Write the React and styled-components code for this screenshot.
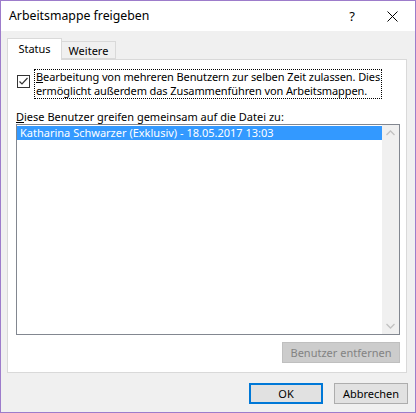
import styled, { createGlobalStyle } from 'styled-components'

const GlobalStyle = createGlobalStyle`
  html, body {
    margin: 0;
    padding: 0;
    background: #ffffff;
  }
  body {
    font-family: "Noto Sans", "Open Sans", sans-serif;
    font-size: 11px;
    color: #000;
  }
  * {
    box-sizing: border-box;
  }
`

const Window = styled.div`
  width: 416px;
  height: 413px;
  border: 1px solid #9d7ccb;
  display: flex;
  flex-direction: column;
  background: #f0f0f0;
`

const TitleBar = styled.div`
  height: 30px;
  background: #ffffff;
  display: flex;
  align-items: center;
  padding-left: 8px;
  flex-shrink: 0;
`

const Title = styled.div`
  flex: 1;
  font-size: 12.3px;
  padding-bottom: 1px;
`

const TitleButton = styled.div`
  width: ${(p) => p.$w}px;
  height: 30px;
  display: flex;
  align-items: center;
  justify-content: center;
  font-size: 13px;
`

const Body = styled.div`
  flex: 1;
  display: flex;
  flex-direction: column;
  padding: 7px 7px 9px 6px;
`

const TabRow = styled.div`
  display: flex;
  align-items: flex-end;
  height: 21px;
  position: relative;
  z-index: 1;
`

const Tab = styled.div`
  height: ${(p) => (p.$active ? 22 : 18)}px;
  width: ${(p) => p.$w}px;
  margin-bottom: ${(p) => (p.$active ? -1 : 0)}px;
  background: ${(p) => (p.$active ? '#ffffff' : '#f0f0f0')};
  border: 1px solid #d9d9d9;
  border-bottom: ${(p) => (p.$active ? 'none' : '1px solid #d9d9d9')};
  border-left: ${(p) => (p.$first ? '1px solid #d9d9d9' : 'none')};
  display: flex;
  align-items: center;
  justify-content: center;
  padding-bottom: ${(p) => (p.$active ? 2 : 0)}px;
`

const Panel = styled.div`
  height: 314px;
  margin-right: 1px;
  background: #ffffff;
  border: 1px solid #d9d9d9;
  padding: 9px 6px 7px 8px;
  display: flex;
  flex-direction: column;
`

const CheckRow = styled.div`
  display: flex;
  align-items: flex-start;
  gap: 4px;
`

const CheckBox = styled.div`
  width: 13px;
  height: 13px;
  margin-top: 6px;
  margin-left: 1px;
  border: 1px solid #333333;
  background: #ffffff;
  display: flex;
  align-items: center;
  justify-content: center;
  flex-shrink: 0;
`

const CheckLabel = styled.div`
  width: 348px;
  height: 30px;
  border: 1px dotted #000;
  padding: 0 0 0 1px;
  line-height: 14px;
  letter-spacing: -0.1px;
  white-space: nowrap;
`

const FieldLabel = styled.div`
  margin-top: 10px;
  line-height: 15px;
  white-space: nowrap;
`

const ListBox = styled.div`
  height: 211px;
  border: 1px solid #828790;
  display: flex;
  padding-top: 1px;
`

const Items = styled.div`
  flex: 1;
`

const Item = styled.div`
  height: 14px;
  line-height: 14px;
  background: ${(p) => (p.$selected ? '#3399ff' : 'transparent')};
  color: ${(p) => (p.$selected ? '#ffffff' : '#000000')};
  padding-left: 3px;
  white-space: nowrap;
`

const ScrollBar = styled.div`
  width: 17px;
  margin-top: -1px;
  background: #f0f0f0;
  display: flex;
  flex-direction: column;
  justify-content: space-between;
  align-items: center;
  padding: 5px 0;
`

const PanelActions = styled.div`
  display: flex;
  justify-content: flex-end;
  margin-top: 7px;
`

const Button = styled.div`
  width: ${(p) => p.$w}px;
  height: 21px;
  display: flex;
  align-items: center;
  justify-content: center;
  background: ${(p) => (p.$disabled ? '#cccccc' : '#e1e1e1')};
  border: ${(p) =>
    p.$default ? '2px solid #0078d7' : p.$disabled ? '1px solid #bfbfbf' : '1px solid #adadad'};
  color: ${(p) => (p.$disabled ? '#838383' : '#000000')};
`

const Footer = styled.div`
  display: flex;
  justify-content: flex-end;
  gap: 11px;
  margin-top: 10px;
`

const U = styled.span`
  text-decoration: underline;
`

function Chevron({ up }) {
  return (
    <svg width="9" height="6" viewBox="0 0 9 6">
      <path
        d={up ? 'M0.5 5 L4.5 1 L8.5 5' : 'M0.5 1 L4.5 5 L8.5 1'}
        fill="none"
        stroke="#c2c2c2"
        strokeWidth="1.3"
      />
    </svg>
  )
}

export default function App() {
  return (
    <>
      <GlobalStyle />
      <Window>
        <TitleBar>
          <Title>Arbeitsmappe freigeben</Title>
          <TitleButton $w={34}>?</TitleButton>
          <TitleButton $w={46}>
            <svg width="11" height="11" viewBox="0 0 11 11">
              <path d="M0.5 0.5 L10.5 10.5 M10.5 0.5 L0.5 10.5" stroke="#000" strokeWidth="1" />
            </svg>
          </TitleButton>
        </TitleBar>
        <Body>
          <TabRow>
            <Tab $active $first $w={55}>Status</Tab>
            <Tab $w={54}>Weitere</Tab>
          </TabRow>
          <Panel>
            <CheckRow>
              <CheckBox>
                <svg width="11" height="11" viewBox="0 0 11 11">
                  <path d="M1.5 5.5 L4 8 L9.5 2" fill="none" stroke="#333" strokeWidth="1.2" />
                </svg>
              </CheckBox>
              <CheckLabel>
                <U>B</U>earbeitung von mehreren Benutzern zur selben Zeit zulassen. Dies
                <br />
                ermöglicht außerdem das Zusammenführen von Arbeitsmappen.
              </CheckLabel>
            </CheckRow>
            <FieldLabel>
              <U>D</U>iese Benutzer greifen gemeinsam auf die Datei zu:
            </FieldLabel>
            <ListBox>
              <Items>
                <Item $selected>Katharina Schwarzer (Exklusiv) - 18.05.2017 13:03</Item>
              </Items>
              <ScrollBar>
                <Chevron up />
                <Chevron />
              </ScrollBar>
            </ListBox>
            <PanelActions>
              <Button $w={118} $disabled>Benutzer entfernen</Button>
            </PanelActions>
          </Panel>
          <Footer>
            <Button $w={74} $default>OK</Button>
            <Button $w={74}>Abbrechen</Button>
          </Footer>
        </Body>
      </Window>
    </>
  )
}
